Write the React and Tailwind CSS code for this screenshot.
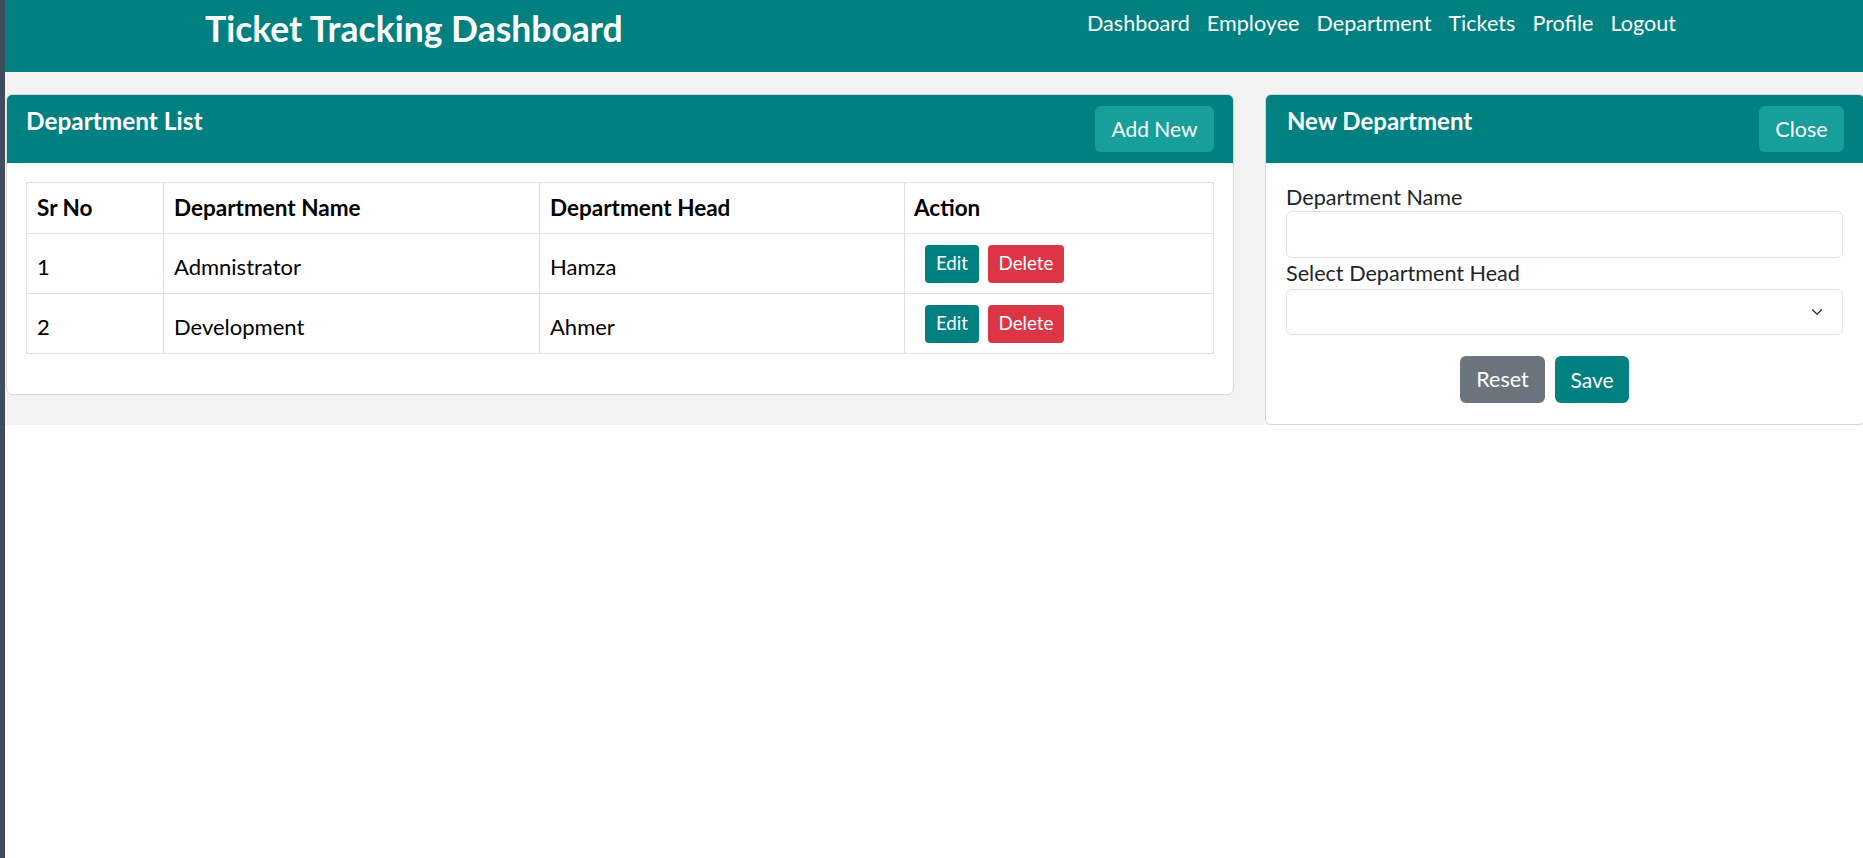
import { ChevronDown } from 'lucide-react'

const departments = [
    { id: 1, name: 'Admnistrator', head: 'Hamza' },
    { id: 2, name: 'Development', head: 'Ahmer' },
]

const navLinks = ['Dashboard', 'Employee', 'Department', 'Tickets', 'Profile', 'Logout']

export default function App() {
    return (
        <div className="h-screen w-full flex overflow-hidden bg-white font-['Lato',sans-serif] text-[#212529]">

            {/* window edge */}
            <div className="w-[5px] shrink-0 bg-[#3e4c5e]" />

            <div className="flex-1 min-w-0">

                {/* Header */}
                <header className="h-[72px] bg-[#008080] flex items-start pl-[200px] pr-[187px]">
                    <h1 className="text-[35.5px] font-bold text-white leading-none pt-[11px]">
                        Ticket Tracking Dashboard
                    </h1>

                    <nav className="ml-auto flex gap-[17px] pt-[9px]">
                        {navLinks.map(link => (
                            <a key={link} href="#" className="text-white text-[21.6px] leading-[28px]">
                                {link}
                            </a>
                        ))}
                    </nav>
                </header>

                <div className="bg-[#f3f3f3] pt-[22px] pl-[1px] flex items-start gap-[31px]">

                    {/* Department List */}
                    <div className="w-[1228px] shrink-0 bg-white border border-[#d6d6d6] rounded-[6px] overflow-hidden">

                        <div className="bg-[#008080] flex items-start justify-between px-[19px] pt-[11px] pb-[11px]">
                            <h2 className="text-white text-[24.4px] font-bold leading-[30px]">
                                Department List
                            </h2>

                            <button className="bg-[#17a09b] text-white text-[21px] rounded-[6px] h-[46px] w-[119px]">
                                Add New
                            </button>
                        </div>

                        <div className="px-[19px] pt-[19px] pb-[40px]">
                            <table className="w-full border-collapse">
                                <thead>
                                    <tr className="h-[51px] text-[22.5px]">
                                        <th className="w-[137px] border border-[#dee2e6] text-left font-bold px-[10px] text-black">Sr No</th>
                                        <th className="w-[376px] border border-[#dee2e6] text-left font-bold px-[10px] text-black">Department Name</th>
                                        <th className="w-[365px] border border-[#dee2e6] text-left font-bold px-[10px] text-black">Department Head</th>
                                        <th className="border border-[#dee2e6] text-left font-bold px-[9px] text-black">Action</th>
                                    </tr>
                                </thead>
                                <tbody>
                                    {departments.map(dep => (
                                        <tr key={dep.id} className="h-[60px] text-[22px]">
                                            <td className="border border-[#dee2e6] px-[10px] align-middle text-black pt-[6px]">{dep.id}</td>
                                            <td className="border border-[#dee2e6] px-[10px] align-middle text-black pt-[6px]">{dep.name}</td>
                                            <td className="border border-[#dee2e6] px-[10px] align-middle text-black pt-[6px]">{dep.head}</td>
                                            <td className="border border-[#dee2e6] pl-[20px] align-middle">
                                                <div className="flex gap-[9px]">
                                                    <button className="bg-[#008080] text-white text-[18.8px] rounded-[4px] h-[38px] w-[54px]">
                                                        Edit
                                                    </button>
                                                    <button className="bg-[#dc3545] text-white text-[18.8px] rounded-[4px] h-[38px] w-[76px]">
                                                        Delete
                                                    </button>
                                                </div>
                                            </td>
                                        </tr>
                                    ))}
                                </tbody>
                            </table>
                        </div>
                    </div>

                    {/* New Department */}
                    <div className="w-[600px] shrink-0 bg-white border border-[#d6d6d6] rounded-[6px] overflow-hidden">

                        <div className="bg-[#008080] flex items-start justify-between pl-[21px] pr-[20px] pt-[11px] pb-[11px]">
                            <h2 className="text-white text-[24px] font-bold leading-[30px]">
                                New Department
                            </h2>

                            <button className="bg-[#17a09b] text-white text-[21.5px] rounded-[6px] h-[46px] w-[85px]">
                                Close
                            </button>
                        </div>

                        <div className="pl-[20px] pr-[21px] pt-[21px] pb-[21px]">
                            <label className="block text-[21.6px] leading-[26px] mb-[1px]">
                                Department Name
                            </label>
                            <input
                                type="text"
                                className="w-full h-[47px] border border-[#dee2e6] rounded-[6px] px-3 outline-none"
                            />

                            <label className="block text-[21.6px] leading-[26px] mt-[2px] mb-[3px]">
                                Select Department Head
                            </label>
                            <div className="relative">
                                <select className="w-full h-[46px] border border-[#dee2e6] rounded-[6px] px-3 appearance-none bg-white outline-none">
                                    <option value=""></option>
                                </select>
                                <ChevronDown
                                    size={18}
                                    strokeWidth={1.8}
                                    className="absolute right-[17px] top-[14px] text-[#343a40] pointer-events-none"
                                />
                            </div>

                            <div className="flex justify-center gap-[10px] mt-[21px] pr-[40px]">
                                <button className="bg-[#6c757d] text-white text-[21.5px] rounded-[6px] h-[47px] w-[85px]">
                                    Reset
                                </button>
                                <button className="bg-[#008080] text-white text-[21px] rounded-[6px] h-[47px] w-[74px]">
                                    Save
                                </button>
                            </div>
                        </div>
                    </div>

                </div>
            </div>
        </div>
    )
}
